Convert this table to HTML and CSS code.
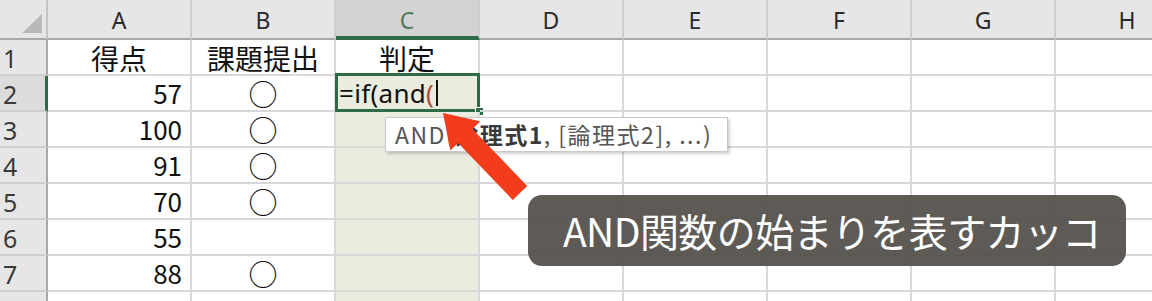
FILE: index.html
```html
<!DOCTYPE html>
<html lang="ja">
<head>
    <meta charset="UTF-8">
    <title>判定シート</title>
    <link rel="stylesheet" href="styles.css">
</head>
<body>
    <div class="sheet">
        <div class="row head-row">
            <div class="corner"></div>
            <div class="col-head">A</div>
            <div class="col-head">B</div>
            <div class="col-head current">C</div>
            <div class="col-head">D</div>
            <div class="col-head">E</div>
            <div class="col-head">F</div>
            <div class="col-head">G</div>
            <div class="col-head">H</div>
        </div>
        <div class="row">
            <div class="row-head">1</div>
            <div class="cell center">得点</div>
            <div class="cell center">課題提出</div>
            <div class="cell center">判定</div>
            <div class="cell"></div><div class="cell"></div><div class="cell"></div><div class="cell"></div><div class="cell"></div>
        </div>
        <div class="row">
            <div class="row-head current">2</div>
            <div class="cell num">57</div>
            <div class="cell center mark">○</div>
            <div class="cell sel active">
                <span class="formula">=if(and<span class="paren">(</span></span><span class="caret"></span>
                <div class="active-frame"></div>
                <div class="fill-handle"></div>
            </div>
            <div class="cell"></div><div class="cell"></div><div class="cell"></div><div class="cell"></div><div class="cell"></div>
        </div>
        <div class="row">
            <div class="row-head">3</div>
            <div class="cell num">100</div>
            <div class="cell center mark">○</div>
            <div class="cell sel"></div>
            <div class="cell"></div><div class="cell"></div><div class="cell"></div><div class="cell"></div><div class="cell"></div>
        </div>
        <div class="row">
            <div class="row-head">4</div>
            <div class="cell num">91</div>
            <div class="cell center mark">○</div>
            <div class="cell sel"></div>
            <div class="cell"></div><div class="cell"></div><div class="cell"></div><div class="cell"></div><div class="cell"></div>
        </div>
        <div class="row">
            <div class="row-head">5</div>
            <div class="cell num">70</div>
            <div class="cell center mark">○</div>
            <div class="cell sel"></div>
            <div class="cell"></div><div class="cell"></div><div class="cell"></div><div class="cell"></div><div class="cell"></div>
        </div>
        <div class="row">
            <div class="row-head">6</div>
            <div class="cell num">55</div>
            <div class="cell center mark"></div>
            <div class="cell sel"></div>
            <div class="cell"></div><div class="cell"></div><div class="cell"></div><div class="cell"></div><div class="cell"></div>
        </div>
        <div class="row">
            <div class="row-head">7</div>
            <div class="cell num">88</div>
            <div class="cell center mark">○</div>
            <div class="cell sel"></div>
            <div class="cell"></div><div class="cell"></div><div class="cell"></div><div class="cell"></div><div class="cell"></div>
        </div>
        <div class="row">
            <div class="row-head"></div>
            <div class="cell"></div>
            <div class="cell"></div>
            <div class="cell sel"></div>
            <div class="cell"></div><div class="cell"></div><div class="cell"></div><div class="cell"></div><div class="cell"></div>
        </div>
    </div>

    <!-- function hint shown while typing -->
    <div class="hint">AND(<b>論理式1</b>, [論理式2], ...)</div>

    <svg class="arrow" width="1152" height="301" viewBox="0 0 1152 301">
        <polygon points="443,113 480.3,121.2 472.5,128.9 527.2,186 512.8,200 458.1,142.9 450.3,150.6" fill="#f23c1c"/>
    </svg>

    <div class="callout">AND関数の始まりを表すカッコ</div>
</body>
</html>
```

FILE: styles.css
```css
body {
    margin: 0;
    width: 1152px;
    height: 301px;
    overflow: hidden;
    position: relative;
    background: #fff;
    font-family: "Noto Sans CJK JP", "Noto Sans", sans-serif;
}

.sheet {
    width: 1200px;
}

.row {
    display: grid;
    grid-template-columns: 48px repeat(8, 144px);
    grid-template-rows: 36px;
    height: 36px;
}

.head-row {
    grid-template-rows: 40px;
    height: 40px;
    background: #e6e6e6;
}

.corner {
    position: relative;
    box-sizing: border-box;
    border-right: 2px solid #c4c4c4;
    border-bottom: 2px solid #a8a8a8;
}

.corner::after {
    content: "";
    position: absolute;
    left: 22px;
    top: 14px;
    width: 20px;
    height: 19px;
    background: #b9b9b9;
    clip-path: polygon(100% 0, 100% 100%, 0 100%);
}

.col-head {
    box-sizing: border-box;
    border-right: 2px solid #cdcdcd;
    border-bottom: 2px solid #a8a8a8;
    display: flex;
    align-items: center;
    justify-content: center;
    padding-top: 2px;
    font-family: "Noto Sans", sans-serif;
    font-size: 23px;
    line-height: 1;
    color: #2a2a2a;
}

.col-head.current {
    background: #d3d3d3;
    border-bottom: 4px solid #2d6c47;
    color: #4f7a5e;
    padding-top: 4px;
}

.row-head {
    box-sizing: border-box;
    background: #e6e6e6;
    border-right: 2px solid #aaaaaa;
    border-bottom: 2px solid #cfcfcf;
    display: flex;
    align-items: center;
    padding: 2px 0 0 3px;
    font-family: "Noto Sans", sans-serif;
    font-size: 25px;
    line-height: 1;
    color: #3a3a3a;
}

.row-head.current {
    background: #dcdcdc;
    border-right: 3px solid #2d6c47;
}

.cell {
    position: relative;
    box-sizing: border-box;
    border-right: 2px solid #d8d8d8;
    border-bottom: 2px solid #d8d8d8;
    display: flex;
    align-items: center;
    padding: 0 8px 0 3px;
    font-size: 26px;
    line-height: 1;
    color: #111;
    white-space: nowrap;
}

.cell.center {
    justify-content: center;
    padding: 2px 0 0;
    font-size: 28px;
}

.cell.num {
    justify-content: flex-end;
    padding-right: 8px;
}

.cell.mark {
    padding: 0;
    font-size: 29px;
}

.cell.sel {
    background: #e9ecdf;
}

.formula {
    font-family: "Noto Sans", sans-serif;
    letter-spacing: 0.3px;
}

.formula .paren {
    color: #b04a32;
}

.caret {
    display: inline-block;
    width: 2px;
    height: 26px;
    margin-left: 2px;
    background: #111;
}

.active-frame {
    position: absolute;
    left: -1px;
    top: -3px;
    right: -2px;
    bottom: -2px;
    border: 3px solid #2d6c47;
}

.fill-handle {
    position: absolute;
    right: -6px;
    bottom: -6px;
    width: 7px;
    height: 7px;
    background: #2d6c47;
    border: 1px solid #fff;
}

.hint {
    position: absolute;
    left: 385px;
    top: 117px;
    width: 343px;
    height: 35px;
    box-sizing: border-box;
    padding-left: 9px;
    background: #fff;
    border: 1px solid #c8c8c8;
    box-shadow: 2px 2px 3px rgba(0, 0, 0, 0.18);
    font-size: 23px;
    line-height: 33px;
    color: #555;
    letter-spacing: 1.5px;
    white-space: nowrap;
}

.hint b {
    color: #3a3a3a;
}

.arrow {
    position: absolute;
    left: 0;
    top: 0;
}

.callout {
    position: absolute;
    left: 528px;
    top: 195px;
    width: 598px;
    height: 71px;
    box-sizing: border-box;
    padding-left: 35px;
    border-radius: 14px;
    background: rgba(82, 77, 73, 0.93);
    color: #fff;
    font-size: 39px;
    line-height: 71px;
    letter-spacing: -0.6px;
    white-space: nowrap;
}
```
